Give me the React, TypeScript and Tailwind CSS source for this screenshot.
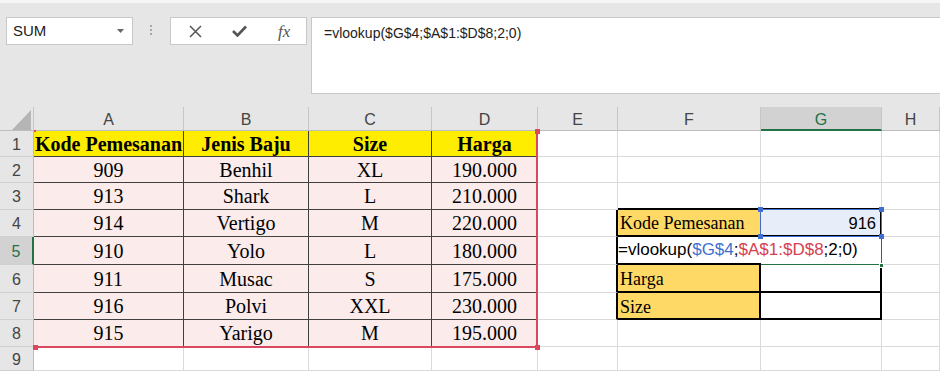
import React from 'react';

const COLS = ['A', 'B', 'C', 'D', 'E', 'F', 'G', 'H'];

const DATA = [
  ['909', 'Benhil', 'XL', '190.000'],
  ['913', 'Shark', 'L', '210.000'],
  ['914', 'Vertigo', 'M', '220.000'],
  ['910', 'Yolo', 'L', '180.000'],
  ['911', 'Musac', 'S', '175.000'],
  ['916', 'Polvi', 'XXL', '230.000'],
  ['915', 'Yarigo', 'M', '195.000'],
];

const HEAD = ['Kode Pemesanan', 'Jenis Baju', 'Size', 'Harga'];

const GRID = 'border-r border-b border-[#dadada]';

const Corner = () => (
  <div className="relative bg-[#e6e6e6] border-r border-b border-r-[#c6c6c6] border-b-[#bdbdbd]">
    <svg className="absolute left-[12px] top-[3px]" width="19" height="20" viewBox="0 0 19 20">
      <polygon points="19,0 19,20 0,20" fill="#b5b5b5" />
    </svg>
  </div>
);

const ColHeader = ({ c }: { c: string }) =>
  c === 'G' ? (
    <div className="flex items-center justify-center pt-[3px] bg-[#d2d2d2] text-[#217346] text-[16px] border-r border-r-[#c6c6c6] border-b-2 border-b-[#217346]">
      {c}
    </div>
  ) : (
    <div className="flex items-center justify-center pt-[3px] bg-[#e6e6e6] text-[#444] text-[16px] border-r border-r-[#c6c6c6] border-b border-b-[#bdbdbd]">
      {c}
    </div>
  );

const RowHeader = ({ r }: { r: number }) =>
  r === 5 ? (
    <div className="flex items-center justify-center pt-[2px] bg-[#d2d2d2] text-[#217346] text-[16px] border-r-2 border-r-[#217346] border-b border-b-[#d0d0d0]">
      {r}
    </div>
  ) : (
    <div className="flex items-center justify-center pt-[2px] bg-[#e6e6e6] text-[#444] text-[16px] border-r border-r-[#bdbdbd] border-b border-b-[#d0d0d0]">
      {r}
    </div>
  );

function tableCell(r: number, ci: number) {
  if (r === 1) {
    return (
      <div
        key={`${r}-${ci}`}
        className="flex items-center justify-center bg-[#ffed00] border-r border-b border-[#404040] font-['Liberation_Serif',serif] font-bold text-[20px] text-black whitespace-nowrap overflow-hidden"
      >
        {HEAD[ci]}
      </div>
    );
  }
  return (
    <div
      key={`${r}-${ci}`}
      className="flex items-center justify-center bg-[#fbebeb] border-r border-b border-[#404040] font-['Liberation_Serif',serif] text-[20px] text-black"
    >
      {DATA[r - 2][ci]}
    </div>
  );
}

function rightCells(r: number) {
  const e =
    r >= 4 && r <= 7 ? (
      <div key={`${r}-E`} className="border-r-2 border-r-black border-b border-b-[#dadada]" />
    ) : (
      <div key={`${r}-E`} className={GRID} />
    );

  let f: React.ReactNode;
  let g: React.ReactNode;
  if (r === 3) {
    f = <div key="3-F" className="border-r border-r-[#dadada] border-b-2 border-b-black" />;
    g = <div key="3-G" className="border-r border-r-[#dadada] border-b-2 border-b-black" />;
  } else if (r === 4) {
    f = (
      <div key="4-F" className="flex items-center pl-[2px] pt-[2px] bg-[#ffd966] border-r border-r-[#dadada] border-b-2 border-b-black font-['Liberation_Serif',serif] text-[18px] text-black whitespace-nowrap">
        Kode Pemesanan
      </div>
    );
    g = (
      <div key="4-G" className="flex items-center justify-end pr-[4px] pt-[2px] bg-[#e8eef9] border-r-2 border-b-2 border-black text-[16.5px] text-black">
        916
      </div>
    );
  } else if (r === 5) {
    f = (
      <div key="5-F" className="relative z-10 flex items-center border-b-2 border-b-black text-[17px] text-black whitespace-nowrap">
        <span>=vlookup(</span>
        <span className="text-[#3f6fd0]">$G$4</span>
        <span>;</span>
        <span className="text-[#d6404f]">$A$1:$D$8</span>
        <span>;2;0)</span>
        <span className="ml-[2px] w-px h-[19px] bg-black" />
      </div>
    );
    g = <div key="5-G" className="border-r border-b border-[#217346]" />;
  } else if (r === 6 || r === 7) {
    f = (
      <div key={`${r}-F`} className="flex items-center pl-[2px] pt-[3px] bg-[#ffd966] border-r-2 border-b-2 border-black font-['Liberation_Serif',serif] text-[18px] text-black">
        {r === 6 ? 'Harga' : 'Size'}
      </div>
    );
    g = <div key={`${r}-G`} className="border-r-2 border-b-2 border-black" />;
  } else {
    f = <div key={`${r}-F`} className={GRID} />;
    g = <div key={`${r}-G`} className={GRID} />;
  }
  return [e, f, g, <div key={`${r}-H`} className={GRID} />];
}

const Handle = ({ className }: { className: string }) => (
  <div className={`absolute w-[5px] h-[5px] ${className}`} />
);

export default function App() {
  const rows = [1, 2, 3, 4, 5, 6, 7, 8, 9];

  return (
    <div className="w-[940px] h-[371px] overflow-hidden bg-white font-['Liberation_Sans',Arial,sans-serif]">
      {/* Ribbon bottom / formula bar */}
      <div className="h-[107px] bg-[#e6e6e6] flex flex-col">
        <div className="h-[3px] bg-[#f6f6f6]" />
        <div className="flex items-start pt-[14px] pl-[6px]">
          <div className="w-[127px] h-[28px] bg-white border border-[#c8c8c8] flex items-center justify-between pl-[6px] pr-[8px]">
            <span className="text-[15px] text-[#222]">SUM</span>
            <svg width="7" height="4" viewBox="0 0 7 4">
              <polygon points="0,0 7,0 3.5,4" fill="#666" />
            </svg>
          </div>
          <div className="ml-[17px] mt-[8px] flex flex-col gap-[2px]">
            <div className="w-[2px] h-[2px] bg-[#a8a8a8]" />
            <div className="w-[2px] h-[2px] bg-[#a8a8a8]" />
            <div className="w-[2px] h-[2px] bg-[#a8a8a8]" />
          </div>
          <div className="ml-[18px] w-[137px] h-[28px] bg-white border border-[#c8c8c8] flex items-center">
            <svg className="ml-[18px]" width="13" height="13" viewBox="0 0 13 13">
              <path d="M1 1 L12 12 M12 1 L1 12" stroke="#555" strokeWidth="1.5" fill="none" />
            </svg>
            <svg className="ml-[30px]" width="15" height="12" viewBox="0 0 15 12">
              <path d="M1 6 L5.5 10.5 L14 1.5" stroke="#555" strokeWidth="2.6" fill="none" />
            </svg>
            <span className="ml-[31px] font-['Liberation_Serif',serif] italic text-[17px] text-[#555] leading-none">
              fx
            </span>
          </div>
          <div className="ml-[4px] flex-1 h-[77px] bg-white border border-[#c8c8c8] border-r-0 pl-[12px] pt-[5px] text-[14px] text-[#222]">
            =vlookup($G$4;$A$1:$D$8;2;0)
          </div>
        </div>
      </div>

      {/* Sheet */}
      <div className="relative grid grid-cols-[34px_150px_125px_123px_106px_80px_143px_121px_58px] grid-rows-[24px_26px_26px_27px_27px_28px_28px_27px_27px_24px]">
        <Corner />
        {COLS.map((c) => (
          <ColHeader key={c} c={c} />
        ))}
        {rows.map((r) => (
          <React.Fragment key={r}>
            <RowHeader r={r} />
            {[0, 1, 2, 3].map((ci) =>
              r <= 8 ? tableCell(r, ci) : <div key={`${r}-${ci}`} className={GRID} />
            )}
            {rightCells(r)}
          </React.Fragment>
        ))}

        {/* red reference range A1:D8 */}
        <div className="absolute left-[536px] top-[24px] w-[2px] h-[217px] bg-[#d9485f]" />
        <div className="absolute left-[34px] top-[239px] w-[504px] h-[2px] bg-[#d9485f]" />
        <div className="absolute left-[34px] top-[23px] w-[2px] h-[2px] bg-[#d9485f]" />
        <Handle className="left-[535px] top-[22px] bg-[#d9485f]" />
        <Handle className="left-[535px] top-[238px] bg-[#d9485f]" />
        <Handle className="left-[33px] top-[238px] bg-[#d9485f] w-[3px]" />

        {/* blue reference G4 */}
        <div className="absolute left-[760px] top-[102px] w-[122px] h-[28px] border border-[#3f6fd0]" />
        <Handle className="left-[758px] top-[100px] bg-[#3f6fd0]" />
        <Handle className="left-[879px] top-[100px] bg-[#3f6fd0]" />
        <Handle className="left-[758px] top-[127px] bg-[#3f6fd0]" />
        <Handle className="left-[879px] top-[127px] bg-[#3f6fd0]" />

        {/* active cell fill handle */}
        <Handle className="left-[879px] top-[156px] bg-[#217346] border border-white" />
      </div>
    </div>
  );
}
